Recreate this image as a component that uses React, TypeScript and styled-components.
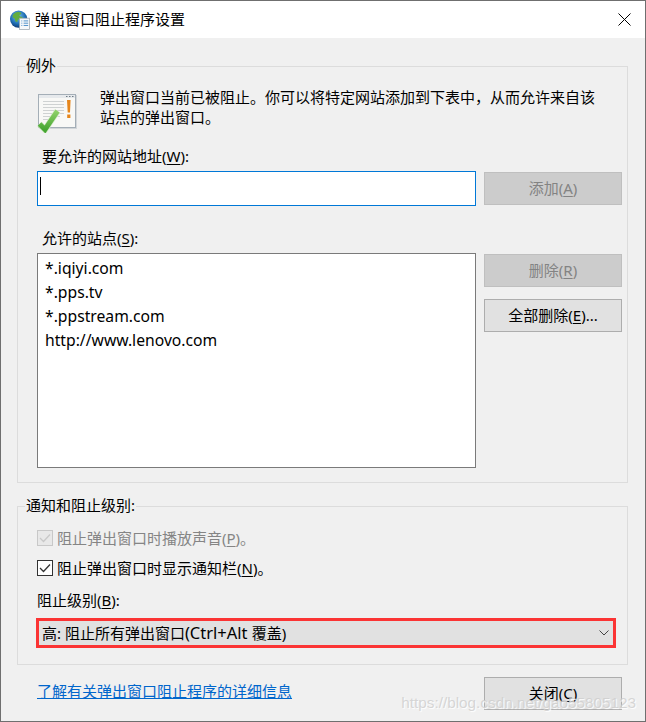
import React from "react";
import styled, { createGlobalStyle } from "styled-components";

const Global = createGlobalStyle`
  html, body { margin: 0; padding: 0; background: #f0f0f0; }
  body { font-family: "Noto Sans", "Noto Sans CJK SC", sans-serif; font-size: 15px; color: #000; }
  * { box-sizing: border-box; }
  u { text-underline-offset: 2px; }
`;

const Dialog = styled.div`
  position: relative;
  width: 646px;
  height: 722px;
  display: flex;
  flex-direction: column;
  background: #f0f0f0;
  border: 1px solid #6f6f6f;
  overflow: hidden;
`;

const TitleBar = styled.div`
  height: 37px;
  flex: none;
  display: flex;
  align-items: center;
  padding: 0 14px 0 9px;
  background: #fff;
`;

const TitleText = styled.div`
  margin-left: 5px;
  height: 20px;
  line-height: 18px;
  flex: 1;
`;

const Content = styled.div`
  flex: 1;
  display: flex;
  flex-direction: column;
  padding: 18px 17px 0 16px;
`;

const Group = styled.fieldset<{ $h: number }>`
  height: ${(p) => p.$h}px;
  margin: 0;
  padding: 0 19px 0 19px;
  border: 1px solid #dcdcdc;
  min-width: 0;
`;

const Legend = styled.legend`
  margin-left: -12px;
  padding: 0 1px 0 1px;
  height: 20px;
  line-height: 18px;
`;

const Intro = styled.div`
  display: flex;
  height: 54px;
  margin-top: 17px;
  margin-left: -1px;
`;

const IntroText = styled.p`
  margin: -6px 0 0 22px;
  width: 498px;
  line-height: 20px;
`;

const FieldLabel = styled.div`
  margin-left: 5px;
  height: 20px;
  line-height: 18px;
`;

const Row = styled.div`
  display: grid;
  grid-template-columns: 439px 138px;
  column-gap: 8px;
`;

const UrlInput = styled.div`
  height: 35px;
  margin-top: 4px;
  border: 1px solid #0078d7;
  background: #fff;
  padding: 5px 2px;
  display: flex;
`;

const Caret = styled.span`
  width: 1px;
  height: 18px;
  background: #000;
`;

const Button = styled.div<{ $off?: boolean }>`
  height: 33px;
  padding-bottom: 2px;
  display: flex;
  align-items: center;
  justify-content: center;
  background: ${(p) => (p.$off ? "#cccccc" : "#e1e1e1")};
  border: 1px solid ${(p) => (p.$off ? "#bfbfbf" : "#adadad")};
  color: ${(p) => (p.$off ? "#838383" : "#000")};
`;

const AddButton = styled(Button)`
  margin-top: 5px;
`;

const ListLabel = styled(FieldLabel)`
  margin-top: 23px;
`;

const ListBox = styled.div`
  height: 215px;
  margin-top: 4px;
  border: 1px solid #7a7a7a;
  background: #fff;
  padding: 2px 7px;
`;

const ListItem = styled.div`
  height: 24px;
  line-height: 24px;
  font-size: 15.7px;
`;

const SideButtons = styled.div`
  display: flex;
  flex-direction: column;
  gap: 12px;
  margin-top: 5px;
`;

const SecondGroup = styled(Group)`
  margin-top: 13px;
`;

const CheckRow = styled.div<{ $off?: boolean }>`
  display: flex;
  align-items: center;
  gap: 4px;
  height: 20px;
  margin-top: ${(p) => (p.$off ? "12px" : "10px")};
  color: ${(p) => (p.$off ? "#858585" : "#000")};
`;

const CheckText = styled.span`
  margin-bottom: 2px;
`;

const Box = styled.span<{ $off?: boolean }>`
  width: 16px;
  height: 16px;
  flex: none;
  display: flex;
  align-items: center;
  justify-content: center;
  background: ${(p) => (p.$off ? "#e8e8e8" : "#fff")};
  border: 1px solid ${(p) => (p.$off ? "#c8c8c8" : "#333")};
`;

const LevelLabel = styled.div`
  margin-top: 13px;
  height: 20px;
  line-height: 18px;
`;

const Select = styled.div`
  height: 30px;
  width: 580px;
  margin: 7px 0 0 -1px;
  padding: 0 4px 0 3px;
  display: flex;
  align-items: center;
  justify-content: space-between;
  background: #e1e1e1;
  border: 3px solid #fb3434;
`;

const SelectText = styled.span`
  margin-bottom: 2px;
`;

const LatinRun = styled.span`
  font-size: 16.5px;
`;

const Footer = styled.div`
  display: flex;
  justify-content: space-between;
  align-items: flex-start;
  padding: 12px 6px 0 20px;
`;

const Link = styled.a`
  color: #0066cc;
  text-decoration: underline;
  line-height: 20px;
  margin-top: 4px;
`;

const CloseButton = styled(Button)`
  width: 138px;
`;

const Watermark = styled.div`
  position: absolute;
  right: 9px;
  bottom: 9px;
  font-family: "Liberation Sans", sans-serif;
  font-size: 15.3px;
  color: rgba(205, 205, 205, 0.8);
  text-shadow: 1px 1px 1px #fff;
  pointer-events: none;
`;

const GlobeIcon = () => (
  <svg width="20" height="20" viewBox="0 0 22 22">
    <defs>
      <radialGradient id="g" cx="45%" cy="35%" r="70%">
        <stop offset="0" stopColor="#7fc4ee" />
        <stop offset="0.6" stopColor="#1f6fb5" />
        <stop offset="1" stopColor="#0d2f66" />
      </radialGradient>
    </defs>
    <circle cx="9.5" cy="10" r="9.5" fill="url(#g)" />
    <path d="M5 3.5c2-1.5 5-1.8 7-.8 1 1 0 2.2-1.5 2.5-.5 1.5 1.5 2.5 2.8 2.3l1 2-3 1.5-2.5-.5-1 3-2-1-.5-3L3 8c-.5-2 .5-3.3 2-4.5z" fill="#63ad3f" />
    <rect x="10.5" y="9" width="11" height="12.5" fill="#f6f8fa" stroke="#9aa5ae" strokeWidth="0.8" />
    <path d="M12.5 12h1M15 12h5M12.5 14.5h1M15 14.5h5M12.5 17h1M15 17h5" stroke="#3f87c5" strokeWidth="1" />
  </svg>
);

const NoticeIcon = () => (
  <svg width="42" height="40" viewBox="0 0 42 40">
    <defs>
      <linearGradient id="chk" x1="0" y1="0" x2="0" y2="1">
        <stop offset="0" stopColor="#8fd06a" />
        <stop offset="1" stopColor="#46a632" />
      </linearGradient>
    </defs>
    <rect x="3" y="2" width="38" height="34" fill="#8d9aa6" opacity="0.3" />
    <rect x="2.5" y="1.5" width="37" height="33" fill="#f8f8f6" stroke="#a4aeb7" />
    <path d="M3 2h36v3H3z" fill="#e6e9ec" />
    <path d="M30 3.5h1.5M33 3.5h1.5M36 3.5h1.5" stroke="#6f7b85" />
    <path d="M7 8.5h21M7 11.5h21M7 14.5h21M7 17.5h21M7 20.5h21M7 23.5h17M7 26.5h12" stroke="#cfd2d2" strokeWidth="1.2" />
    <path d="M31 7h3.6l-.6 12.5h-2.3zM31.2 21.5h3.2V25h-3.2z" fill="#e6861c" />
    <path d="M3.5 31l5.5 5.5L21.5 18" fill="none" stroke="#d7ebcb" strokeWidth="6.5" />
    <path d="M3.5 31l5.5 5.5L21.5 18" fill="none" stroke="url(#chk)" strokeWidth="5" />
  </svg>
);

const Tick = ({ color }: { color: string }) => (
  <svg width="12" height="10" viewBox="0 0 12 10">
    <path d="M1 5l3.5 3.5L11 1.5" fill="none" stroke={color} strokeWidth="1.3" />
  </svg>
);

const CloseGlyph = () => (
  <svg width="13" height="13" viewBox="0 0 13 13">
    <path d="M.5.5l12 12M12.5.5l-12 12" stroke="#000" strokeWidth="1" />
  </svg>
);

const Chevron = () => (
  <svg width="10" height="6" viewBox="0 0 10 6">
    <path d="M.5.5L5 5l4.5-4.500" fill="none" stroke="#444" strokeWidth="1" />
  </svg>
);

const sites = ["*.iqiyi.com", "*.pps.tv", "*.ppstream.com", "http://www.lenovo.com"];

export default function App() {
  return (
    <Dialog>
      <Global />
      <TitleBar>
        <GlobeIcon />
        <TitleText>弹出窗口阻止程序设置</TitleText>
        <CloseGlyph />
      </TitleBar>
      <Content>
        <Group $h={427}>
          <Legend>例外</Legend>
          <Intro>
            <NoticeIcon />
            <IntroText>弹出窗口当前已被阻止。你可以将特定网站添加到下表中，从而允许来自该站点的弹出窗口。</IntroText>
          </Intro>
          <FieldLabel>要允许的网站地址(<u>W</u>):</FieldLabel>
          <Row>
            <UrlInput><Caret /></UrlInput>
            <AddButton $off>添加(<u>A</u>)</AddButton>
          </Row>
          <ListLabel>允许的站点(<u>S</u>):</ListLabel>
          <Row>
            <ListBox>
              {sites.map((s) => <ListItem key={s}>{s}</ListItem>)}
            </ListBox>
            <SideButtons>
              <Button $off>删除(<u>R</u>)</Button>
              <Button>全部删除(<u>E</u>)...</Button>
            </SideButtons>
          </Row>
        </Group>
        <SecondGroup $h={169}>
          <Legend>通知和阻止级别:</Legend>
          <CheckRow $off>
            <Box $off><Tick color="#c8c8c8" /></Box>
            <CheckText>阻止弹出窗口时播放声音(<u>P</u>)。</CheckText>
          </CheckRow>
          <CheckRow>
            <Box><Tick color="#333" /></Box>
            <CheckText>阻止弹出窗口时显示通知栏(<u>N</u>)。</CheckText>
          </CheckRow>
          <LevelLabel>阻止级别(<u>B</u>):</LevelLabel>
          <Select>
            <SelectText>高: 阻止所有弹出窗口<LatinRun>(Ctrl+Alt </LatinRun>覆盖)</SelectText>
            <Chevron />
          </Select>
        </SecondGroup>
        <Footer>
          <Link>了解有关弹出窗口阻止程序的详细信息</Link>
          <CloseButton>关闭(<u>C</u>)</CloseButton>
        </Footer>
      </Content>
      <Watermark>https://blog.csdn.net/gao55805123</Watermark>
    </Dialog>
  );
}
